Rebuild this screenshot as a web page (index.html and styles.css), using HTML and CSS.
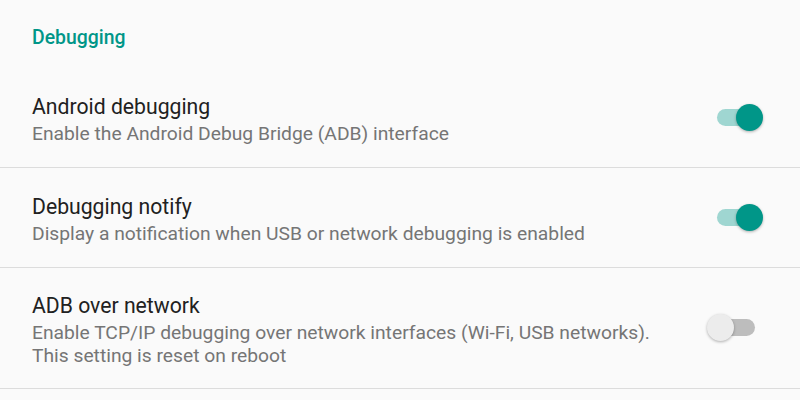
FILE: index.html
```html
<!DOCTYPE html>
<html>
<head>
<meta charset="utf-8">
<link rel="stylesheet" href="styles.css">
</head>
<body>
<div class="screen">
  <div class="category">Debugging</div>
  <div class="pref">
    <div class="texts">
      <div class="title">Android debugging</div>
      <div class="summary">Enable the Android Debug Bridge (ADB) interface</div>
    </div>
    <div class="switch on"><div class="track"></div><div class="thumb"></div></div>
  </div>
  <div class="pref">
    <div class="texts">
      <div class="title">Debugging notify</div>
      <div class="summary">Display a notification when USB or network debugging is enabled</div>
    </div>
    <div class="switch on"><div class="track"></div><div class="thumb"></div></div>
  </div>
  <div class="pref tall">
    <div class="texts">
      <div class="title">ADB over network</div>
      <div class="summary">Enable TCP/IP debugging over network interfaces (Wi-Fi, USB networks).<br>This setting is reset on reboot</div>
    </div>
    <div class="switch off"><div class="track"></div><div class="thumb"></div></div>
  </div>
</div>
</body>
</html>
```
FILE: styles.css
```css
html, body {
  margin: 0;
  padding: 0;
  background: #fafafa;
}
.screen {
  width: 800px;
  height: 400px;
  overflow: hidden;
  font-family: Roboto, "Noto Sans", sans-serif;
  background: #fafafa;
}
.category {
  color: #009688;
  font-weight: 500;
  font-size: 19.4px;
  line-height: 24px;
  height: 68px;
  box-sizing: border-box;
  padding: 26px 0 0 32px;
}
.pref {
  display: flex;
  align-items: center;
  height: 100px;
  box-sizing: border-box;
  padding: 0 37px 0 32px;
  border-bottom: 1px solid #dcdcdc;
}
.pref.tall {
  height: 121px;
}
.texts {
  flex: 1;
  padding-top: 3px;
}
.title {
  color: #212121;
  font-size: 21.2px;
  line-height: 26px;
}
.summary {
  color: #757575;
  font-size: 19.25px;
  line-height: 23px;
  margin-top: 2px;
}
.switch {
  position: relative;
  width: 56px;
  height: 28px;
}
.track {
  position: absolute;
  left: 10px;
  top: 5px;
  width: 38px;
  height: 17px;
  border-radius: 9px;
}
.thumb {
  position: absolute;
  top: 0;
  width: 27px;
  height: 27px;
  border-radius: 50%;
  box-shadow: 0 1px 3px rgba(0,0,0,0.3);
}
.on .track { background: #9fd6d1; }
.on .thumb { background: #009688; left: 29px; }
.off .track { background: #bdbdbd; }
.off .thumb { background: #ececec; left: 0; }
```
